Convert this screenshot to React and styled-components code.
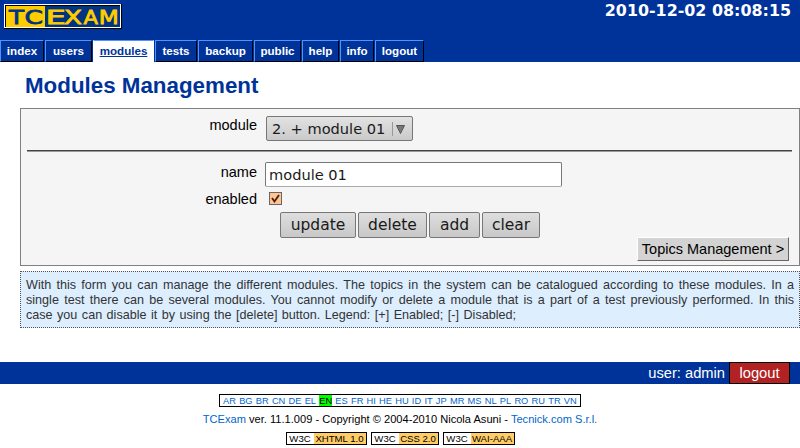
import React from "react";
import styled, { createGlobalStyle, css } from "styled-components";

const Global = createGlobalStyle`
  * { box-sizing: border-box; }
  html, body { margin: 0; padding: 0; }
  body {
    width: 800px; height: 448px; overflow: hidden; background: #fff; color: #000;
    font-family: "Liberation Sans", Arial, sans-serif; font-size: 14.5px;
  }
`;

const Page = styled.div`
  width: 800px;
  height: 448px;
  display: flex;
  flex-direction: column;
`;

const Header = styled.header`
  height: 62px;
  background: #003399;
  display: flex;
  flex-direction: column;
  justify-content: space-between;
`;

const Banner = styled.div`
  display: flex;
  justify-content: space-between;
  padding: 4px 9px 0 4px;
  height: 40px;
`;

const Logo = styled.svg`
  display: block;
  width: 118px;
  height: 25px;
`;

const Clock = styled.time`
  color: #fff;
  font: bold 15.9px/20px "DejaVu Sans", sans-serif;
  margin-top: -3px;
`;

const Tabs = styled.nav`
  display: flex;
  height: 22px;
  gap: 1px;
`;

const Tab = styled.a`
  width: ${(p) => p.$w}px;
  height: 22px;
  border: 1px solid;
  border-color: #4d94ff #000 #000 #4d94ff;
  color: #fff;
  font: bold 11.6px/20px "Liberation Sans", Arial, sans-serif;
  text-align: center;
  white-space: nowrap;
  ${(p) =>
    p.$active &&
    css`
      background: #fff;
      border-color: #4d94ff #fff #fff #fff;
      color: #003399;
      text-decoration: underline;
    `}
`;

const Title = styled.h1`
  margin: 0;
  height: 46px;
  padding: 10px 0 0 25px;
  color: #003399;
  font-size: 22.35px;
  line-height: 28px;
`;

const FormBox = styled.form`
  margin-left: 20px;
  width: 780px;
  height: 158px;
  padding: 7px 6px 0;
  background: #f5f5f5;
  border: 1px solid #808080;
  display: flex;
  flex-direction: column;
`;

const Row = styled.div`
  display: flex;
  height: ${(p) => p.$h}px;
`;

const Label = styled.label`
  width: 230px;
  text-align: right;
  line-height: ${(p) => p.$lh || 21}px;
  margin-right: ${(p) => p.$gap}px;
`;

const Select = styled.div`
  width: 147px;
  height: 25px;
  display: flex;
  align-items: center;
  padding-left: 5px;
  border: 1px solid #777;
  border-radius: 2px;
  background: linear-gradient(#e2e2e2, #cacaca);
  color: #1a1a1a;
  font: 14.6px "DejaVu Sans", sans-serif;
  white-space: nowrap;
`;

const Arrow = styled.svg`
  width: 18px;
  height: 16px;
  margin-left: 5px;
  flex: none;
`;

const Rule = styled.hr`
  width: 765px;
  height: 2px;
  margin: 0 0 10px;
  flex: none;
  border: 0;
  border-top: 1px solid #444;
  border-bottom: 1px solid #999;
`;

const Input = styled.input`
  width: 297px;
  height: 25px;
  padding: 0 3px;
  border: 1px solid #777;
  border-bottom-color: #aaa;
  border-radius: 2px;
  background: #fff;
  color: #1a1a1a;
  font: 14.6px "DejaVu Sans", sans-serif;
  outline: none;
`;

const Check = styled.svg`
  width: 13px;
  height: 13px;
  margin-top: 3px;
`;

const Buttons = styled.div`
  display: flex;
  gap: 2px;
  padding-left: 253px;
  height: 25px;
`;

const Button = styled.button`
  width: ${(p) => p.$w}px;
  height: 26px;
  padding: 0;
  border: 1px solid #777;
  border-radius: 2px;
  background: linear-gradient(#dedede, #c8c8c8);
  color: #1a1a1a;
  font: 15.5px/22px "DejaVu Sans", sans-serif;
`;

const TopicsLink = styled.a`
  align-self: flex-end;
  margin-right: 4px;
  width: 152px;
  height: 24px;
  border: 1px solid;
  border-color: #fff #666 #666 #fff;
  background: #d3d3d3;
  line-height: 22px;
  text-align: center;
  white-space: nowrap;
`;

const Help = styled.section`
  margin: 5px 0 0 20px;
  width: 780px;
  height: 57px;
  padding: 6px 5px 0;
  border: 1px dotted #555;
  background: #ddeeff;
  color: #333;
  font-size: 12.6px;
  line-height: 15px;
`;

const HelpLine = styled.div`
  text-align: justify;
  text-align-last: justify;
  white-space: nowrap;
  width: ${(p) => p.$w || 768}px;
`;

const UserBar = styled.div`
  margin-top: 34px;
  height: 22px;
  padding-right: 10px;
  background: #003399;
  color: #fff;
  display: flex;
  justify-content: flex-end;
  font-size: 14.7px;
  line-height: 22px;
`;

const Logout = styled.a`
  width: 61px;
  margin-left: 4px;
  border: 1px solid #000;
  background: #b22222;
  text-align: center;
  line-height: 20px;
`;

const Footer = styled.footer`
  display: flex;
  flex-direction: column;
  align-items: center;
`;

const Languages = styled.div`
  margin-top: 10px;
  width: 362px;
  height: 13px;
  border: 1px solid #000;
  display: flex;
  justify-content: space-between;
  padding: 0 3px;
  font-size: 9.3px;
  line-height: 12px;
`;

const Lang = styled.a`
  color: ${(p) => (p.$on ? "#000" : "#0066cc")};
  background: ${(p) => (p.$on ? "#00ff00" : "none")};
`;

const Copyright = styled.div`
  margin-top: 5px;
  font-size: 11.1px;
  line-height: 14px;
  white-space: nowrap;
`;

const Blue = styled.a`
  color: #0066cc;
`;

const Badges = styled.div`
  display: flex;
  gap: 4px;
  margin-top: 6px;
`;

const Badge = styled.a`
  width: ${(p) => p.$w}px;
  height: 13px;
  display: flex;
  border: 1px solid #000;
  font-size: 9.6px;
  line-height: 12px;
  white-space: nowrap;
`;

const BadgeOrg = styled.span`
  width: 27px;
  text-align: center;
`;

const BadgeName = styled.span`
  flex: 1;
  background: #ffcc66;
  text-align: center;
`;

const tabs = [
  ["index", 44], ["users", 47], ["modules", 61], ["tests", 42], ["backup", 55],
  ["public", 47], ["help", 37], ["info", 34], ["logout", 49],
];

const languages = "AR BG BR CN DE EL EN ES FR HI HE HU ID IT JP MR MS NL PL RO RU TR VN".split(" ");

const letters = [
  ["T", 5, 15, "#003380"], ["C", 20.6, 18.5, "#003380"], ["E", 41.8, 20, "#ffcc00"],
  ["X", 60, 18, "#ffcc00"], ["A", 79.5, 14.5, "#ffcc00"], ["M", 94.8, 20, "#ffcc00"],
];

export default function App() {
  return (
    <Page>
      <Global />
      <Header>
        <Banner>
          <Logo viewBox="0 0 118 25">
            <rect width="118" height="25" fill="#000" />
            <rect width="117" height="24" fill="#fff" />
            <rect x="1" y="1" width="115" height="22" fill="#000" />
            <rect x="2" y="2" width="39" height="21" fill="#ffcc00" />
            <rect x="41" y="2" width="75" height="21" fill="#003380" />
            {letters.map(([c, x, w, fill]) => (
              <text key={c} x={x} y="19.5" fill={fill} stroke={fill} strokeWidth=".8"
                textLength={w} lengthAdjust="spacingAndGlyphs"
                fontFamily="DejaVu Sans" fontSize="19.5">{c}</text>
            ))}
          </Logo>
          <Clock>2010-12-02 08:08:15</Clock>
        </Banner>
        <Tabs>
          {tabs.map(([name, w]) => (
            <Tab key={name} $w={w} $active={name === "modules"}>{name}</Tab>
          ))}
        </Tabs>
      </Header>
      <Title>Modules Management</Title>
      <FormBox>
        <Row $h={34}>
          <Label $gap={9} $lh={19}>module</Label>
          <Select>
            2. + module 01
            <Arrow viewBox="0 0 18 16">
              <path d="M2.5 1v14" stroke="#999" />
              <path d="M6.5 4.5h8l-4 8z" fill="#777" stroke="#555" />
            </Arrow>
          </Select>
        </Row>
        <Rule />
        <Row $h={27}>
          <Label $gap={8}>name</Label>
          <Input defaultValue="module 01" />
        </Row>
        <Row $h={23}>
          <Label $gap={12}>enabled</Label>
          <Check viewBox="0 0 13 13">
            <rect x=".5" y=".5" width="12" height="12" fill="#ffc590" stroke="#666" />
            <path d="M3 6l2.5 3.5L10 3" fill="none" stroke="#4a1c10" strokeWidth="1.8" />
          </Check>
        </Row>
        <Buttons>
          <Button type="button" $w={76}>update</Button>
          <Button type="button" $w={69}>delete</Button>
          <Button type="button" $w={51}>add</Button>
          <Button type="button" $w={58}>clear</Button>
        </Buttons>
        <TopicsLink>Topics Management &gt;</TopicsLink>
      </FormBox>
      <Help>
        <HelpLine>With this form you can manage the different modules. The topics in the system can be catalogued according to these modules. In a</HelpLine>
        <HelpLine>single test there can be several modules. You cannot modify or delete a module that is a part of a test previously performed. In this</HelpLine>
        <HelpLine $w={490}>case you can disable it by using the [delete] button. Legend: [+] Enabled; [-] Disabled;</HelpLine>
      </Help>
      <UserBar>
        user: admin
        <Logout>logout</Logout>
      </UserBar>
      <Footer>
        <Languages>
          {languages.map((l) => <Lang key={l} $on={l === "EN"}>{l}</Lang>)}
        </Languages>
        <Copyright>
          <Blue>TCExam</Blue> ver. 11.1.009 - Copyright © 2004-2010 Nicola Asuni - <Blue>Tecnick.com S.r.l.</Blue>
        </Copyright>
        <Badges>
          <Badge $w={81}><BadgeOrg>W3C</BadgeOrg><BadgeName>XHTML 1.0</BadgeName></Badge>
          <Badge $w={68}><BadgeOrg>W3C</BadgeOrg><BadgeName>CSS 2.0</BadgeName></Badge>
          <Badge $w={72}><BadgeOrg>W3C</BadgeOrg><BadgeName>WAI-AAA</BadgeName></Badge>
        </Badges>
      </Footer>
    </Page>
  );
}
